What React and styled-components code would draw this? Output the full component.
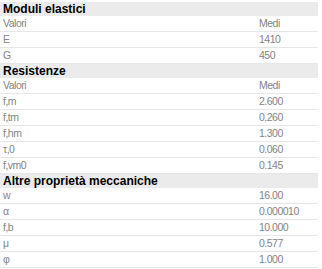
import React from "react";
import styled, { createGlobalStyle } from "styled-components";

const GlobalStyle = createGlobalStyle`
  body {
    margin: 0;
    background: #ffffff;
    font-family: "Liberation Sans", Arial, sans-serif;
  }
`;

const Table = styled.div({
  display: "flex",
  flexDirection: "column",
  width: 318,
  paddingTop: 2,
});

const SectionHeader = styled.div({
  height: 14,
  lineHeight: "14px",
  background: "#ebebeb",
  color: "#000000",
  fontSize: 12,
  fontWeight: 700,
  letterSpacing: 0,
  paddingLeft: 3,
  whiteSpace: "nowrap",
});

const Row = styled.div({
  display: "grid",
  gridTemplateColumns: "256px 1fr",
  height: 15,
  lineHeight: "15px",
  borderBottom: "1px solid #e6e6e6",
  fontSize: 10.5,
  letterSpacing: -0.5,
  color: "#848484",
});

const Cell = styled.div({
  paddingLeft: 3,
  whiteSpace: "nowrap",
  overflow: "hidden",
});

const sections = [
  {
    title: "Moduli elastici",
    rows: [
      ["Valori", "Medi"],
      ["E", "1410"],
      ["G", "450"],
    ],
  },
  {
    title: "Resistenze",
    rows: [
      ["Valori", "Medi"],
      ["f,m", "2.600"],
      ["f,tm", "0.260"],
      ["f,hm", "1.300"],
      ["τ,0", "0.060"],
      ["f,vm0", "0.145"],
    ],
  },
  {
    title: "Altre proprietà meccaniche",
    rows: [
      ["w", "16.00"],
      ["α", "0.000010"],
      ["f,b", "10.000"],
      ["μ", "0.577"],
      ["φ", "1.000"],
    ],
  },
];

const App = () => (
  <>
    <GlobalStyle />
    <Table>
      {sections.map(({ title, rows }) => (
        <React.Fragment key={title}>
          <SectionHeader>{title}</SectionHeader>
          {rows.map(([label, val], i) => (
            <Row key={i}>
              <Cell>{label}</Cell>
              <Cell>{val}</Cell>
            </Row>
          ))}
        </React.Fragment>
      ))}
    </Table>
  </>
);

export default App;
